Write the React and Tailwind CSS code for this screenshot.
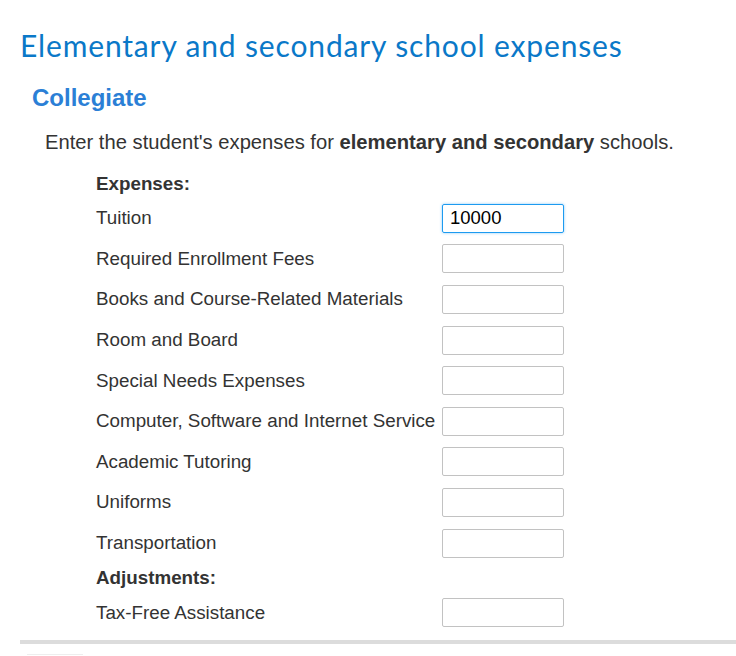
import React from 'react';

const expenseRows = [
    { label: 'Tuition', value: '10000', focused: true },
    { label: 'Required Enrollment Fees' },
    { label: 'Books and Course-Related Materials' },
    { label: 'Room and Board' },
    { label: 'Special Needs Expenses' },
    { label: 'Computer, Software and Internet Service' },
    { label: 'Academic Tutoring' },
    { label: 'Uniforms' },
    { label: 'Transportation' },
];

function Row({ label, value, focused }) {
    return (
        <div className="flex items-center h-[40.6px]">
            <span className="w-[346px] shrink-0 whitespace-nowrap">{label}</span>
            <input
                type="text"
                defaultValue={value || ''}
                className={
                    focused
                        ? 'w-[122px] h-[29px] rounded-[2px] border border-[#1d9bf0] shadow-[0_0_3px_#8cc8f5] px-[7px] text-[18.5px] text-black outline-none'
                        : 'w-[122px] h-[29px] rounded-[2px] border border-[#c2c2c2] px-[7px] text-[18.5px] outline-none'
                }
            />
        </div>
    );
}

export default function App() {
    return (
        <div className="w-[736px] h-[656px] overflow-hidden bg-white font-['Liberation_Sans',Arial,sans-serif]">
            <div className="pl-[20px] pt-[24px]">
                <h1 className="font-['Lato',sans-serif] text-[30px] leading-[42px] text-[#0a78c8] tracking-[0.85px]">
                    Elementary and secondary school expenses
                </h1>
                <h2 className="pl-[12px] mt-[17px] text-[24px] leading-[30px] font-bold text-[#2b7fd6]">
                    Collegiate
                </h2>
                <p className="pl-[25px] mt-[17px] text-[20.2px] leading-[24px] text-[#333]">
                    Enter the student's expenses for <b>elementary and secondary</b> schools.
                </p>

                <div className="pl-[76px] mt-[16px] text-[18.8px] text-[#333]">
                    <div className="h-[28px] flex items-center font-bold">Expenses:</div>
                    {expenseRows.map((r) => (
                        <Row key={r.label} {...r} />
                    ))}
                    <div className="h-[29px] flex items-center font-bold">Adjustments:</div>
                    <Row label="Tax-Free Assistance" />
                </div>

                <div className="mt-[7px] h-[4px] bg-[#dcdcdc]" />
                <div className="ml-[7px] mt-[10px] w-[56px] h-[2px] border-t border-[#eeeeee]" />
            </div>
        </div>
    );
}
